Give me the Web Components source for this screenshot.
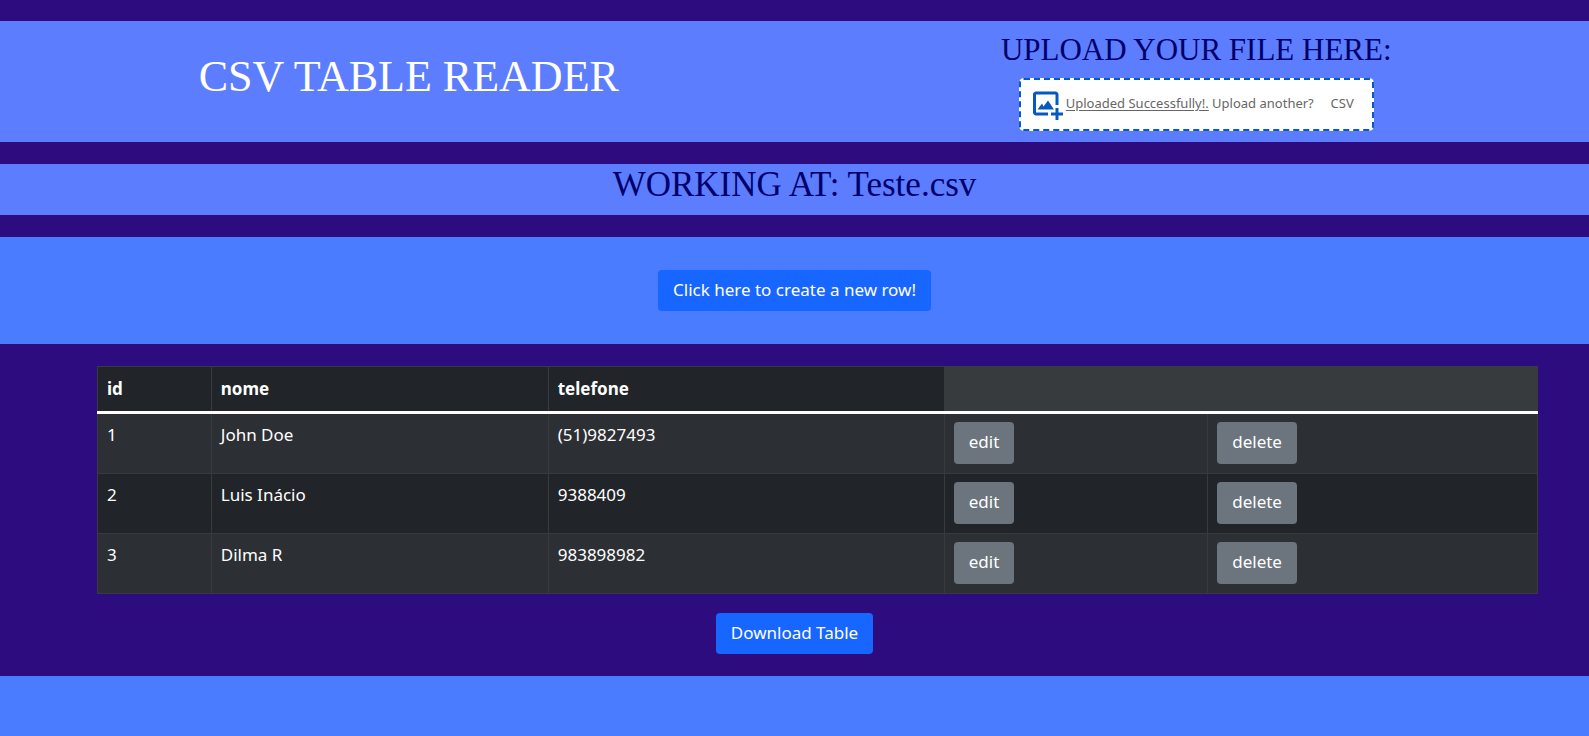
<!DOCTYPE html>
<html lang="en">
<head>
<meta charset="utf-8">
<title>CSV Table Reader</title>
<style>
  body {
    margin: 0;
    min-height: 100vh;
    background: #4a7cff;
    color: #fff;
    font: 17px/27px "Noto Sans", sans-serif;
  }
</style>
</head>
<body>
<csv-app></csv-app>

<script>
const define = (name, html, setup) => {
  const template = document.createElement('template');
  template.innerHTML = html;
  customElements.define(name, class extends HTMLElement {
    constructor() {
      super();
      this.attachShadow({ mode: 'open' }).append(template.content.cloneNode(true));
    }
    connectedCallback() {
      if (setup) setup(this, this.shadowRoot);
    }
  });
};

define('app-button', `
  <style>
    :host { display: inline-block; vertical-align: top; line-height: 27px; }
    button {
      display: block; margin: 0; padding: 5px 14px 7px; border: 1px solid transparent;
      border-radius: 4px; background: #1766ff; color: #fff;
      font: inherit; cursor: pointer;
    }
    :host([kind="secondary"]) button { background: #6c757d; padding: 5px 14px 8px; }
  </style>
  <button type="button"><slot></slot></button>`);

define('file-upload', `
  <style>
    :host { display: block; }
    label {
      box-sizing: border-box; display: flex; align-items: center;
      width: 355px; max-width: 100%; height: 53px; padding: 0 18px 0 9px;
      border: 2px dashed #0658c2; border-radius: 5px;
      background: #fff; color: #666; font-size: 13px; line-height: 20px; cursor: pointer;
    }
    input { position: absolute; width: 1px; height: 1px; opacity: 0; }
    svg { flex: none; width: 36px; height: 36px; fill: #0658c2; }
    span { padding-bottom: 3px; }
    .types { margin-left: auto; }
    u { text-underline-offset: 2px; }
  </style>
  <label>
    <input type="file" accept=".csv">
    <svg viewBox="0 0 32 32" aria-hidden="true">
      <path d="M5.333 6.667H22.667V16H25.333V6.667C25.333 5.196 24.137 4 22.667 4H5.333C3.863 4 2.667 5.196 2.667 6.667V22.667C2.667 24.137 3.863 25.333 5.333 25.333H16V22.667H5.333V6.667Z"/>
      <path d="M10.667 14.667L6.667 20H21.333L16 12L12 17.333L10.667 14.667Z"/>
      <path d="M25.333 18.667H22.667V22.667H18.667V25.333H22.667V29.333H25.333V25.333H29.333V22.667H25.333V18.667Z"/>
    </svg>
    <span><u>Uploaded Successfully!.</u> Upload another?</span>
    <span class="types">CSV</span>
  </label>`);

define('app-header', `
  <style>
    :host {
      display: grid; grid-template-columns: 1fr 1fr; align-items: center;
      box-sizing: border-box; padding: 9px 0 11px 18px; background: #5d7dff;
      font-family: "Liberation Serif", serif;
    }
    h1, h2 { margin: 0; font-weight: 400; text-align: center; }
    h1 { font-size: 44px; line-height: 54px; margin: 0 4px 8px 0; }
    h2 { font-size: 31px; line-height: 40px; color: #00006b; margin-bottom: 8px; }
    .upload { display: flex; flex-direction: column; align-items: center; }
    file-upload { font-family: "Noto Sans", sans-serif; }
  </style>
  <h1>CSV TABLE READER</h1>
  <div class="upload">
    <h2>UPLOAD YOUR FILE HERE:</h2>
    <file-upload></file-upload>
  </div>`);

define('working-file', `
  <style>
    :host { display: block; padding-bottom: 9px; background: #5d7dff; }
    h2 {
      margin: 0; color: #00006b; text-align: center;
      font: 400 35px/42px "Liberation Serif", serif;
    }
  </style>
  <h2>WORKING AT: <slot></slot></h2>`);

define('csv-table', `
  <style>
    :host { display: block; }
    table {
      width: 100%; table-layout: fixed; border-collapse: collapse;
      background: #212529; text-align: left; line-height: 25px;
    }
    th, td { border: 1px solid #373b3e; padding: 8px 9px 9px; vertical-align: top; }
    th { font-weight: 700; height: 26px; padding-top: 9px; }
    thead td { background: #373b3e; }
    thead th, thead td { border-bottom: 3px solid #fff; }
    tbody tr:nth-child(odd) { background: #2c3034; }
    .c1 { width: 7.9%; } .c2 { width: 23.4%; } .c3 { width: 27.5%; } .c4 { width: 18.3%; } .c5 { width: 22.9%; }
  </style>
  <table>
    <colgroup><col class="c1"><col class="c2"><col class="c3"><col class="c4"><col class="c5"></colgroup>
    <thead>
      <tr><th scope="col">id</th><th scope="col">nome</th><th scope="col">telefone</th><td colspan="2"></td></tr>
    </thead>
    <tbody></tbody>
  </table>`,
  (host, root) => {
    const body = root.querySelector('tbody');
    body.replaceChildren();
    for (const row of JSON.parse(host.getAttribute('rows'))) {
      const tr = body.insertRow();
      for (const value of row) tr.insertCell().textContent = value;
      for (const action of ['edit', 'delete']) {
        const button = document.createElement('app-button');
        button.setAttribute('kind', 'secondary');
        button.textContent = action;
        tr.insertCell().append(button);
      }
    }
  });

define('csv-app', `
  <style>
    :host { display: flex; flex-direction: column; gap: 22px; padding: 21px 0 22px; background: #2d0c80; }
    .create { display: flex; justify-content: center; padding: 33px 0; background: #4a7cff; }
    .data { display: flex; flex-direction: column; align-items: center; gap: 19px; }
    csv-table { align-self: stretch; margin: 0 51px 0 97px; }
  </style>
  <app-header></app-header>
  <working-file>Teste.csv</working-file>
  <section class="create"><app-button>Click here to create a new row!</app-button></section>
  <section class="data">
    <csv-table rows='[["1","John Doe","(51)9827493"],["2","Luis Inácio","9388409"],["3","Dilma R","983898982"]]'></csv-table>
    <app-button>Download Table</app-button>
  </section>`);
</script>
</body>
</html>
